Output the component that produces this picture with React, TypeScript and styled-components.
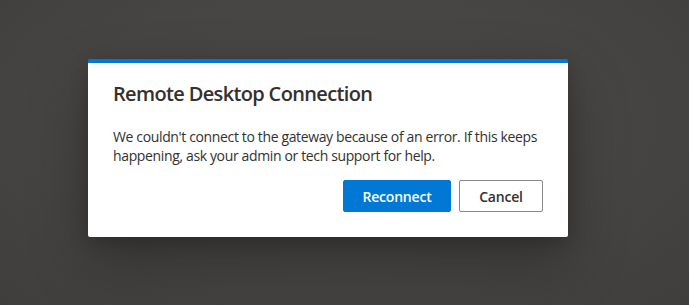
import React from 'react';
import styled, { createGlobalStyle } from 'styled-components';

const GlobalStyle = createGlobalStyle`
  html, body {
    margin: 0;
    padding: 0;
    height: 100%;
    background: #484644;
  }
  body {
    font-family: "Open Sans", "Noto Sans", Arial, sans-serif;
    color: #323130;
  }
`;

const Backdrop = styled.div`
  width: 100vw;
  height: 100vh;
  box-sizing: border-box;
  padding: 59px 0 0 88px;
  background: radial-gradient(ellipse at 50% 40%, #4a4846 0%, #474543 55%, #3f3e3c 100%);
`;

const Dialog = styled.div`
  width: 480px;
  box-sizing: border-box;
  background: #ffffff;
  border-top: 4px solid #0078d4;
  border-radius: 2px;
  padding: 17px 25px 25px;
  box-shadow: 0 25px 60px rgba(0, 0, 0, 0.28), 0 5px 18px rgba(0, 0, 0, 0.18);
  display: flex;
  flex-direction: column;
`;

const Title = styled.h1`
  margin: 0;
  font-size: 20px;
  font-weight: 600;
  line-height: 28px;
  letter-spacing: -0.65px;
  color: #323130;
`;

const Message = styled.p`
  margin: 19px 0 0;
  font-size: 14px;
  line-height: 19px;
  letter-spacing: -0.36px;
  color: #323130;
`;

const Actions = styled.div`
  display: flex;
  justify-content: flex-end;
  gap: 8px;
  margin-top: 15px;
`;

const Button = styled.button<{ $primary?: boolean }>`
  height: 32px;
  box-sizing: border-box;
  padding: 0 16px;
  min-width: ${(p) => (p.$primary ? '108px' : '84px')};
  border-radius: 2px;
  font-family: inherit;
  font-size: 14px;
  font-weight: 600;
  letter-spacing: -0.2px;
  cursor: pointer;
  border: 1px solid ${(p) => (p.$primary ? '#0078d4' : '#8a8886')};
  background: ${(p) => (p.$primary ? '#0078d4' : '#ffffff')};
  color: ${(p) => (p.$primary ? '#ffffff' : '#323130')};
`;

export default function App() {
  return (
    <>
      <GlobalStyle />
      <Backdrop>
        <Dialog role="dialog" aria-labelledby="rdc-title">
          <Title id="rdc-title">Remote Desktop Connection</Title>
          <Message>
            We couldn't connect to the gateway because of an error. If this keeps
            happening, ask your admin or tech support for help.
          </Message>
          <Actions>
            <Button $primary>Reconnect</Button>
            <Button>Cancel</Button>
          </Actions>
        </Dialog>
      </Backdrop>
    </>
  );
}
